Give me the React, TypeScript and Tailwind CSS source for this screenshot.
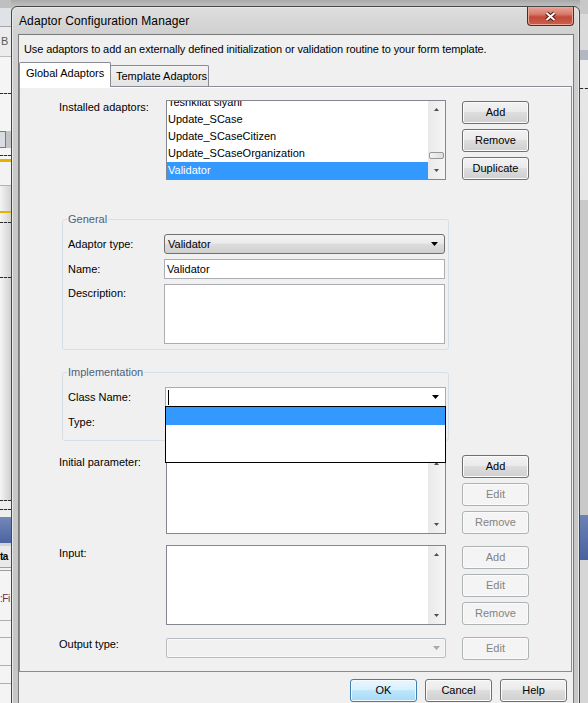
import React from 'react';

// --- Small Win7-style pieces ---
type BtnProps = { label: string; disabled?: boolean; primary?: boolean };

function WinButton({ label, disabled, primary }: BtnProps) {
    let look =
        'border-[#707070] text-black bg-[linear-gradient(to_bottom,#f2f2f2_0%,#ebebeb_45%,#dddddd_50%,#cfcfcf_100%)] shadow-[inset_0_0_0_1px_#fbfbfb]';
    if (primary) {
        look =
            'border-[#3c7fb1] text-black bg-[linear-gradient(to_bottom,#eaf6fd_0%,#d9f0fc_45%,#bee6fd_50%,#a7d9f5_100%)] shadow-[inset_0_0_0_1px_#f4fbfe]';
    }
    if (disabled) {
        look = 'border-[#adb2b5] text-[#838383] bg-[#f4f4f4] shadow-[inset_0_0_0_1px_#fbfbfb]';
    }
    return (
        <div className={`flex h-[23px] w-[67px] shrink-0 items-center justify-center rounded-[3px] border ${look}`}>
            {label}
        </div>
    );
}

function DownArrow({ color = '#000000' }: { color?: string }) {
    return (
        <svg width="7" height="4" viewBox="0 0 7 4" className="shrink-0">
            <path d="M0 0H7L3.5 4Z" fill={color} />
        </svg>
    );
}

function ScrollTri({ up, color = '#4d4d4d' }: { up?: boolean; color?: string }) {
    return (
        <svg width="5" height="3" viewBox="0 0 5 3">
            <path d={up ? 'M0 3H5L2.5 0Z' : 'M0 0H5L2.5 3Z'} fill={color} />
        </svg>
    );
}

function ScrollBar({ thumb }: { thumb?: boolean }) {
    return (
        <div className="flex w-[17px] shrink-0 flex-col bg-[linear-gradient(to_right,#e9e9e9,#f5f5f5)]">
            <div className="flex h-[17px] items-center justify-center">
                <ScrollTri up />
            </div>
            <div className="flex flex-1 flex-col justify-end px-[1px] pb-[3px]">
                {thumb && (
                    <div className="h-[7px] rounded-[2px] border border-[#979797] bg-[linear-gradient(to_right,#f3f3f3,#dedede)]" />
                )}
            </div>
            <div className="flex h-[17px] items-center justify-center">
                <ScrollTri />
            </div>
        </div>
    );
}

function ListBox({ items = [], selected, thumb }: { items?: string[]; selected?: string; thumb?: boolean }) {
    return (
        <div className="flex h-[80px] w-[280px] shrink-0 overflow-hidden border border-[#828790] bg-white">
            <div className="flex-1 overflow-hidden">
                {items.length > 0 && (
                    <div className="-mt-[7px]">
                        {items.map((it) => (
                            <div
                                key={it}
                                className={`h-[17px] whitespace-nowrap pl-[1px] leading-[17px] ${it === selected ? 'bg-[#3399ff] text-white' : ''}`}
                            >
                                {it}
                            </div>
                        ))}
                    </div>
                )}
            </div>
            <ScrollBar thumb={thumb} />
        </div>
    );
}

function TextBox({ value = '', tall }: { value?: string; tall?: boolean }) {
    return (
        <div
            className={`flex w-[281px] shrink-0 border border-[#abadb3] bg-white pl-[2px] ${tall ? 'h-[60px] items-start' : 'h-[20px] items-center'}`}
        >
            {value}
        </div>
    );
}

function CloseButton() {
    return (
        <div className="mr-[5px] flex h-[19px] w-[47px] items-center justify-center rounded-b-[4px] border border-t-0 border-[#5b2620] bg-[linear-gradient(to_bottom,#e8a597_0%,#d67b6b_40%,#c4493a_55%,#cd5f4c_100%)] shadow-[inset_0_0_0_1px_#e9a999]">
            <svg width="13" height="11" viewBox="0 0 13 11">
                <path d="M2.5 2L10.5 9M10.5 2L2.5 9" stroke="#4a1a13" strokeWidth="4" />
                <path d="M2.5 2L10.5 9M10.5 2L2.5 9" stroke="#ffffff" strokeWidth="2" />
            </svg>
        </div>
    );
}

function Dashed() {
    return <div className="h-0 border-t border-dashed border-[#2a2a2a]" />;
}

// --- The app behind the dialog (only thin strips show) ---
function Backdrop() {
    return (
        <div className="absolute inset-0 flex">
            <div className="flex w-[11px] shrink-0 flex-col overflow-hidden">
                <div className="h-[8px] bg-[#bfbfbf]" />
                <div className="h-[19px] border-b border-[#a4a4a4] bg-[#dfe2e7]" />
                <div className="h-[30px] border-b border-[#bcbcbc] bg-[#ececec] pl-[1px] pt-[9px] text-[11px] leading-[11px] text-[#5a5a5a]">
                    B
                </div>
                <div className="h-[36px] bg-[#f5f5f5]" />
                <Dashed />
                <div className="h-[37px] bg-[#f5f5f5]" />
                <div className="h-[17px] w-[6px] border border-l-0 border-[#7c7c7c] bg-[#d9dde3]" />
                <div className="h-[7px] bg-[#f5f5f5]" />
                <Dashed />
                <div className="h-[3px] bg-[#f5f5f5]" />
                <div className="h-[3px] bg-[#e7b100]" />
                <div className="h-[23px] bg-[#f3f3f3]" />
                <div className="h-px bg-[#b3b3b3]" />
                <div className="h-[25px] bg-[linear-gradient(to_right,#f4f4f4,#d2d2d2)]" />
                <div className="h-[2px] bg-[#e7b100]" />
                <div className="h-[9px] bg-[linear-gradient(to_right,#f4f4f4,#d2d2d2)]" />
                <Dashed />
                <div className="h-[54px] bg-[linear-gradient(to_right,#f4f4f4,#d2d2d2)]" />
                <Dashed />
                <div className="h-[222px] bg-[linear-gradient(to_right,#f6f6f6,#cfcfcf)]" />
                <Dashed />
                <div className="h-[8px] bg-[#eeeeee]" />
                <Dashed />
                <div className="h-[7px] bg-[#eeeeee]" />
                <div className="h-[26px] bg-[linear-gradient(to_bottom,#7489b8,#4b63a0)]" />
                <div className="h-[3px] bg-[#cfd3da]" />
                <div className="flex h-[21px] items-center bg-[#e9e9e9] text-[10px] font-bold tracking-[-0.5px]">ta</div>
                <div className="h-px bg-[#9e9e9e]" />
                <div className="h-[2px] bg-[#f2f2f2]" />
                <div className="h-px bg-[#9e9e9e]" />
                <div className="h-[21px] bg-[#f4f4f4]" />
                <div className="h-[13px] bg-[#f4f4f4] text-[10px] leading-[13px] tracking-[-0.5px] text-[#6a2c55]">:Fi</div>
                <div className="h-[15px] bg-[#f4f4f4]" />
                <div className="h-px bg-[#b0b0b0]" />
                <div className="h-[16px] bg-[#f4f4f4]" />
                <div className="h-px bg-[#b0b0b0]" />
                <div className="h-[27px] bg-[#f4f4f4]" />
                <div className="h-px bg-[#b0b0b0]" />
                <div className="h-[17px] bg-[#f4f4f4]" />
                <div className="h-px bg-[#b0b0b0]" />
                <div className="flex-1 bg-[#f4f4f4]" />
            </div>
            <div className="flex-1 bg-[linear-gradient(to_bottom,#a9a9a9,#c3c3c3_7px,#cfcfcf)]" />
            <div className="flex w-[8px] shrink-0 flex-col">
                <div className="h-[14px] bg-[#c8c8c8]" />
                <div className="h-[36px] bg-[#dadada]" />
                <div className="h-[10px] bg-[#b3b8c0]" />
                <div className="h-[28px] bg-[#ececec]" />
                <Dashed />
                <div className="h-[111px] bg-[#e6e6e6]" />
                <div className="h-[315px] bg-[#c9c9c9]" />
                <div className="h-[45px] bg-[linear-gradient(to_bottom,#6b82b5,#4a61a0)]" />
                <div className="flex-1 bg-[#d6d6d6]" />
            </div>
        </div>
    );
}

// --- Dialog ---
const ADAPTORS = ['Teshkilat siyahi', 'Update_SCase', 'Update_SCaseCitizen', 'Update_SCaseOrganization', 'Validator'];

export default function App() {
    return (
        <div className="relative h-[703px] w-[588px] overflow-hidden bg-[#c4c4c4] font-['Liberation_Sans',Arial,sans-serif] text-[11px] leading-[13px] text-black">
            <Backdrop />

            {/* window */}
            <div className="absolute left-[11px] top-[6px] flex h-[720px] w-[569px] flex-col rounded-t-[6px] border border-[#474747] bg-[linear-gradient(to_bottom,#dedede_0px,#d0d0d0_27px,#c8c8c8_200px,#c6c6c6_100%)] shadow-[inset_0_0_0_1px_#e9e9e9]">
                {/* title bar */}
                <div className="flex h-[27px] shrink-0 items-start justify-between">
                    <div className="pl-[7px] pt-[7px] text-[12px] leading-[15px] tracking-[0.1px]">Adaptor Configuration Manager</div>
                    <CloseButton />
                </div>

                <div className="flex flex-1 pl-[6px] pr-[5px]">
                    <div className="flex-1 border border-[#7a7a7a] bg-[#f0f0f0]">
                        <p className="h-[21px] whitespace-nowrap pl-[5px] pt-[8px] tracking-[-0.1px]">
                            Use adaptors to add an externally defined initialization or validation routine to your form template.
                        </p>

                        {/* tabs */}
                        <div className="mt-[6px] flex h-[24px] items-end">
                            <div className="relative z-10 -mb-[1px] h-[25px] w-[92px] rounded-t-[2px] border border-b-0 border-[#898c95] bg-white pl-[6px] pt-[4px]">
                                Global Adaptors
                            </div>
                            <div className="-ml-[1px] h-[21px] w-[99px] rounded-t-[2px] border border-b-0 border-[#898c95] bg-[linear-gradient(to_bottom,#f3f3f3,#e4e4e4)] pl-[5px] pt-[4px]">
                                Template Adaptors
                            </div>
                        </div>

                        {/* tab page */}
                        <div className="mr-[1px] border border-[#898c95] bg-[#f0f0f0] pb-[11px] pt-[13px] shadow-[inset_0_1px_0_#ffffff]">
                            {/* installed adaptors */}
                            <div className="flex">
                                <div className="w-[146px] shrink-0 pl-[39px] pt-[1px]">Installed adaptors:</div>
                                <ListBox items={ADAPTORS} selected="Validator" thumb />
                                <div className="ml-[16px] flex flex-col gap-[5px] pt-[1px]">
                                    <WinButton label="Add" />
                                    <WinButton label="Remove" />
                                    <WinButton label="Duplicate" />
                                </div>
                            </div>

                            {/* General */}
                            <fieldset className="ml-[42px] mt-[32px] w-[387px] rounded-[3px] border border-[#d5dfe5]">
                                <legend className="ml-[4px] h-[14px] px-[1px] leading-[14px] text-[#4e6079]">General</legend>
                                <div className="flex flex-col gap-[5px] pb-[5px] pl-[5px] pt-[8px]">
                                    <div className="flex">
                                        <div className="w-[96px] shrink-0 pt-[4px]">Adaptor type:</div>
                                        <div className="flex h-[20px] w-[281px] items-center justify-between rounded-[3px] border border-[#707070] bg-[linear-gradient(to_bottom,#f2f2f2_0%,#ebebeb_45%,#dddddd_50%,#cfcfcf_100%)] pl-[3px] pr-[6px]">
                                            <span>Validator</span>
                                            <DownArrow />
                                        </div>
                                    </div>
                                    <div className="flex">
                                        <div className="w-[96px] shrink-0 pt-[4px]">Name:</div>
                                        <TextBox value="Validator" />
                                    </div>
                                    <div className="flex">
                                        <div className="w-[96px] shrink-0 pt-[3px]">Description:</div>
                                        <TextBox tall />
                                    </div>
                                </div>
                            </fieldset>

                            {/* Implementation */}
                            <fieldset className="ml-[42px] mt-[15px] w-[387px] rounded-[3px] border border-[#d5dfe5]">
                                <legend className="ml-[4px] h-[14px] px-[1px] leading-[14px] text-[#4e6079]">Implementation</legend>
                                <div className="flex flex-col gap-[5px] pb-[8px] pl-[5px] pt-[8px]">
                                    <div className="flex">
                                        <div className="w-[97px] shrink-0 pt-[4px]">Class Name:</div>
                                        <div className="relative flex h-[20px] w-[281px] items-center justify-between border border-[#abadb3] bg-white pl-[2px] pr-[6px]">
                                            <span className="h-[15px] w-px bg-black" />
                                            <DownArrow />
                                            {/* open drop-down list */}
                                            <div className="absolute left-[-1px] top-full z-20 flex h-[57px] w-[281px] flex-col border border-black bg-white">
                                                <div className="h-[18px] bg-[#3399ff]" />
                                            </div>
                                        </div>
                                    </div>
                                    <div className="flex">
                                        <div className="w-[97px] shrink-0 pt-[4px]">Type:</div>
                                        <TextBox />
                                    </div>
                                </div>
                            </fieldset>

                            {/* initial parameter */}
                            <div className="mt-[13px] flex">
                                <div className="w-[146px] shrink-0 pl-[39px] pt-[2px]">Initial parameter:</div>
                                <ListBox />
                                <div className="ml-[16px] flex flex-col gap-[5px] pt-[1px]">
                                    <WinButton label="Add" />
                                    <WinButton label="Edit" disabled />
                                    <WinButton label="Remove" disabled />
                                </div>
                            </div>

                            {/* input */}
                            <div className="mt-[11px] flex">
                                <div className="w-[146px] shrink-0 pl-[39px] pt-[2px]">Input:</div>
                                <ListBox />
                                <div className="ml-[16px] flex flex-col gap-[5px] pt-[1px]">
                                    <WinButton label="Add" disabled />
                                    <WinButton label="Edit" disabled />
                                    <WinButton label="Remove" disabled />
                                </div>
                            </div>

                            {/* output type */}
                            <div className="mt-[12px] flex">
                                <div className="w-[146px] shrink-0 pl-[39px] pt-[1px]">Output type:</div>
                                <div className="mt-[1px] flex h-[20px] w-[280px] items-center justify-end rounded-[2px] border border-[#b8bcc0] bg-[#f1f1f1] pr-[5px] shadow-[inset_0_0_0_1px_#f8f8f8]">
                                    <DownArrow color="#a8a8a8" />
                                </div>
                                <div className="ml-[16px]">
                                    <WinButton label="Edit" disabled />
                                </div>
                            </div>
                        </div>

                        {/* dialog buttons */}
                        <div className="mt-[7px] flex justify-end gap-[8px] pr-[6px]">
                            <WinButton label="OK" primary />
                            <WinButton label="Cancel" />
                            <WinButton label="Help" />
                        </div>
                    </div>
                </div>
            </div>
        </div>
    );
}
